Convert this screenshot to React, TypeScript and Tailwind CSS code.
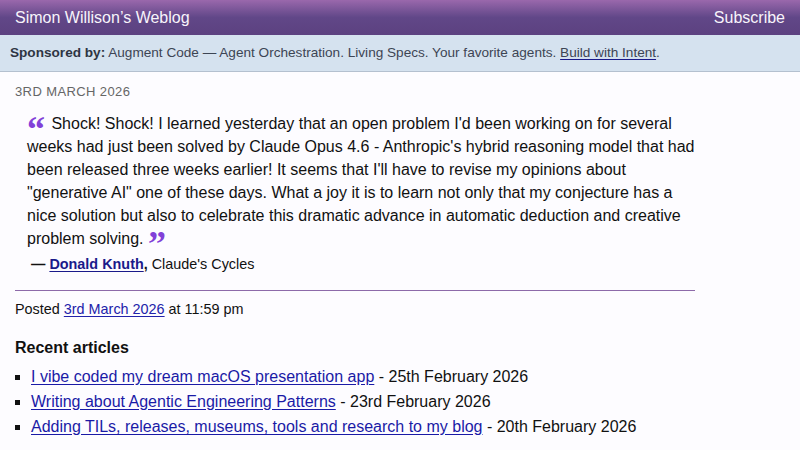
import React from "react";

const recent = [
  { title: "I vibe coded my dream macOS presentation app", date: "25th February 2026" },
  { title: "Writing about Agentic Engineering Patterns", date: "23rd February 2026" },
  { title: "Adding TILs, releases, museums, tools and research to my blog", date: "20th February 2026" },
];

function QuoteMark({ children }: { children: React.ReactNode }) {
  return (
    <span className="relative top-[12px] mr-[2px] font-['Liberation_Serif',serif] text-[36px] font-bold leading-[0] text-[#8240d8]">
      {children}
    </span>
  );
}

function App() {
  return (
    <div className="min-h-screen bg-[#fdfcff] font-['Liberation_Sans',Arial,sans-serif] text-[#111]">
      <header className="flex h-[35px] items-center justify-between bg-gradient-to-b from-[#9a68ac] via-[#614788] to-[#5c4180] px-[15px] text-[#f8f4fb]">
        <span className="text-base">Simon Willison’s Weblog</span>
        <span className="text-base">Subscribe</span>
      </header>
      <div className="flex h-[37px] items-center border-b border-[#b4c0cf] bg-[#d5e2ef] px-[10px] text-[13.6px] text-[#3d4554]">
        <span>
          <b className="text-[#2e3543]">Sponsored by:</b> Augment Code — Agent Orchestration. Living Specs. Your favorite agents.{" "}
          <span className="underline decoration-[#1a1a8a] underline-offset-2">Build with Intent</span>.
        </span>
      </div>

      <main className="box-content w-[680px] px-[15px]">
        <div className="mt-[10px] text-[13px] uppercase tracking-[0.03em] text-[#666]">3rd March 2026</div>

        <blockquote className="ml-[12px] mt-[10px] text-base leading-[23px]">
          <QuoteMark>“</QuoteMark> Shock! Shock! I learned yesterday that an open problem I'd been working on for
          several weeks had just been solved by Claude Opus 4.6 - Anthropic's hybrid reasoning model that had been
          released three weeks earlier! It seems that I'll have to revise my opinions about "generative AI" one of
          these days. What a joy it is to learn not only that my conjecture has a nice solution but also to celebrate
          this dramatic advance in automatic deduction and creative problem solving. <QuoteMark>”</QuoteMark>
        </blockquote>
        <p className="ml-[16px] mt-[4px] text-[14.4px]">
          <b>
            — <span className="text-[#1a1a8a] underline underline-offset-2">Donald Knuth</span>,
          </b>{" "}
          Claude's Cycles
        </p>

        <div className="mt-[15px] h-px bg-[#8d6aa9]" />

        <p className="mt-[8px] text-[14.4px]">
          Posted <span className="text-[#2222aa] underline underline-offset-2">3rd March 2026</span> at 11:59 pm
        </p>

        <h2 className="mt-[15px] text-base font-bold">Recent articles</h2>
        <ul className="mt-[4px] list-[square] pl-[16px] text-base">
          {recent.map((r) => (
            <li key={r.title} className="leading-[25px]">
              <span className="text-[#1a1aa6] underline underline-offset-2">{r.title}</span> - {r.date}
            </li>
          ))}
        </ul>
      </main>
    </div>
  );
}

export default App;
